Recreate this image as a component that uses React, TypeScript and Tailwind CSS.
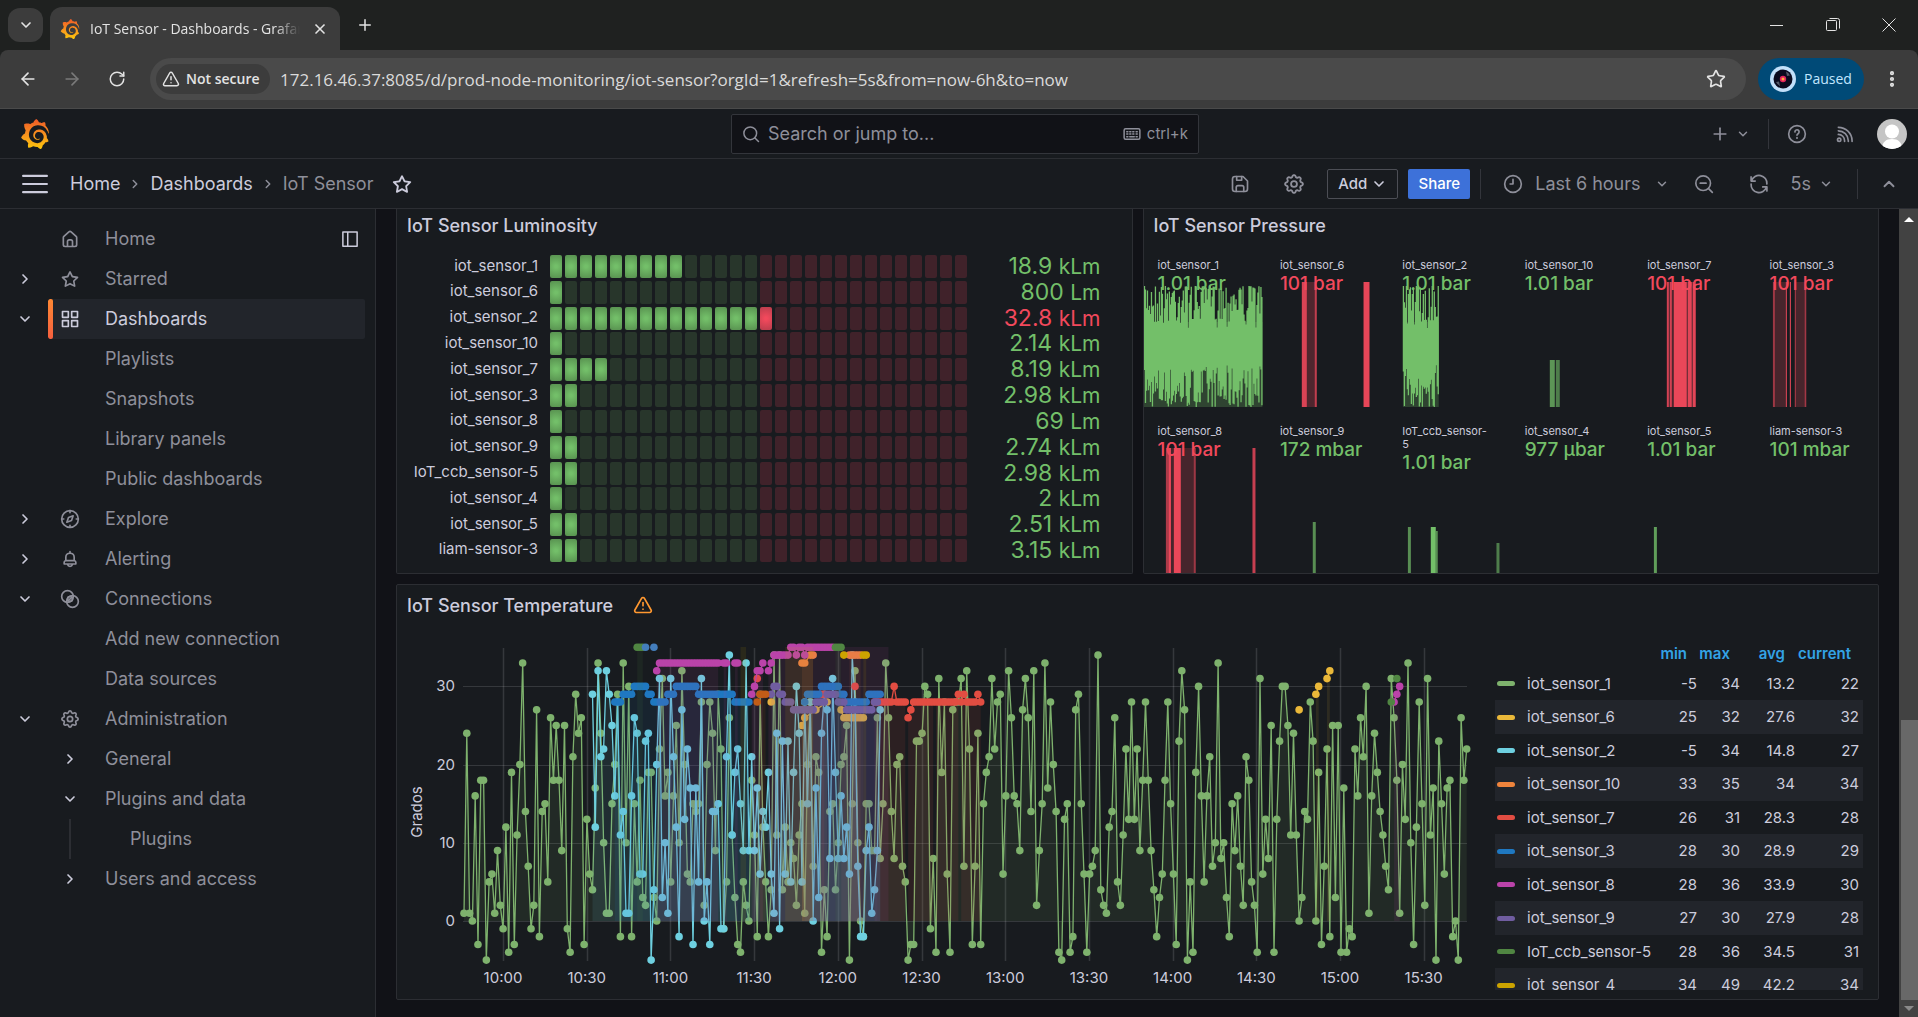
import React from "react";
import { SiGrafana } from "react-icons/si";
import {
  ArrowLeft,
  ArrowRight,
  ChevronDown,
  ChevronRight,
  ChevronUp,
  EllipsisVertical,
  Plus,
  RotateCw,
  Star,
  TriangleAlert,
  X,
} from "lucide-react";

/* ---------------------------------- icons --------------------------------- */

const PATHS = {
  star: "M22,9.67A1,1,0,0,0,21.14,9l-5.69-.83L12.9,3a1,1,0,0,0-1.8,0L8.55,8.16,2.86,9a1,1,0,0,0-.81.68,1,1,0,0,0,.25,1l4.13,4-1,5.68A1,1,0,0,0,6.9,21.44L12,18.77l5.1,2.67a.93.93,0,0,0,.46.12,1,1,0,0,0,.59-.19,1,1,0,0,0,.4-1l-1-5.68,4.13-4A1,1,0,0,0,22,9.67Zm-6.15,4a1,1,0,0,0-.29.88l.72,4.2-3.76-2a1.06,1.06,0,0,0-.94,0l-3.76,2,.72-4.2a1,1,0,0,0-.29-.88l-3-3,4.21-.61a1,1,0,0,0,.76-.55L12,5.7l1.88,3.82a1,1,0,0,0,.76.55l4.21.61Z",
  apps: "M10,13H3a1,1,0,0,0-1,1v7a1,1,0,0,0,1,1h7a1,1,0,0,0,1-1V14A1,1,0,0,0,10,13ZM9,20H4V15H9ZM21,2H14a1,1,0,0,0-1,1v7a1,1,0,0,0,1,1h7a1,1,0,0,0,1-1V3A1,1,0,0,0,21,2ZM20,9H15V4h5Zm1,4H14a1,1,0,0,0-1,1v7a1,1,0,0,0,1,1h7a1,1,0,0,0,1-1V14A1,1,0,0,0,21,13Zm-1,7H15V15h5ZM10,2H3A1,1,0,0,0,2,3v7a1,1,0,0,0,1,1h7a1,1,0,0,0,1-1V3A1,1,0,0,0,10,2ZM9,9H4V4H9Z",
  home: "M20,8h0L14,2.74a3,3,0,0,0-4,0L4,8a3,3,0,0,0-1,2.26V19a3,3,0,0,0,3,3H18a3,3,0,0,0,3-3V10.25A3,3,0,0,0,20,8ZM14,20H10V15a1,1,0,0,1,1-1h2a1,1,0,0,1,1,1Zm5-1a1,1,0,0,1-1,1H16V15a3,3,0,0,0-3-3H11a3,3,0,0,0-3,3v5H6a1,1,0,0,1-1-1V10.25a1,1,0,0,1,.34-.75l6-5.25a1,1,0,0,1,1.32,0l6,5.25a1,1,0,0,1,.34.75Z",
  bell: "M18,13.18V10a6,6,0,0,0-5-5.91V3a1,1,0,0,0-2,0V4.09A6,6,0,0,0,6,10v3.18A3,3,0,0,0,4,16v2a1,1,0,0,0,1,1H8.14a4,4,0,0,0,7.72,0H19a1,1,0,0,0,1-1V16A3,3,0,0,0,18,13.18ZM8,10a4,4,0,0,1,8,0v3H8Zm4,10a2,2,0,0,1-1.72-1h3.44A2,2,0,0,1,12,20Zm6-3H6V16a1,1,0,0,1,1-1H17a1,1,0,0,1,1,1Z",
};

const COG = (() => {
  const pts: string[] = [];
  for (let i = 0; i < 96; i++) {
    const t = (i / 96) * Math.PI * 2;
    const c = Math.cos(8 * t);
    const r = 8.6 + 1.1 * Math.sign(c) * Math.pow(Math.abs(c), 0.6);
    pts.push(`${(12 + r * Math.cos(t)).toFixed(2)},${(12 + r * Math.sin(t)).toFixed(2)}`);
  }
  return "M" + pts.join("L") + "Z";
})();

type IconName =
  | keyof typeof PATHS
  | "cog"
  | "compass"
  | "link"
  | "dock"
  | "search"
  | "keyboard"
  | "save"
  | "clock"
  | "zoomOut"
  | "sync"
  | "help"
  | "rss"
  | "menu";

function Icon({ name, className = "size-5" }: { name: IconName; className?: string }) {
  if (name in PATHS) {
    return (
      <svg viewBox="0 0 24 24" fill="currentColor" className={className} aria-hidden="true">
        <path d={PATHS[name as keyof typeof PATHS]} />
      </svg>
    );
  }
  const body: Record<string, React.ReactNode> = {
    cog: (
      <>
        <path d={COG} />
        <circle cx="12" cy="12" r="3.2" />
      </>
    ),
    compass: (
      <>
        <circle cx="12" cy="12" r="10" />
        <path d="M15.8 8.2 13.8 13.8 8.2 15.8 10.2 10.2ZM12 2v2.5M12 19.500v2.5M2 12h2.500M19.500 12H22" />
      </>
    ),
    link: (
      <>
        <circle cx="9" cy="9" r="7" />
        <circle cx="15" cy="15" r="7" />
        <circle cx="12" cy="12" r="3" />
        <path d="M10 14 14 10" />
      </>
    ),
    dock: (
      <>
        <path d="M2.500 2.500h19v19h-19ZM9 2.500v19" />
      </>
    ),
    search: (
      <>
        <circle cx="11" cy="11" r="8.500" />
        <path d="m17 17 5 5" />
      </>
    ),
    keyboard: (
      <>
        <rect x="1.500" y="5" width="21" height="14" rx="2" />
        <path d="M5 9h1.500M9 9h1.500M13 9h1.500M17.500 9H19M5 12h1.500M9 12h1.500M13 12h1.500M17.500 12H19M5 15.500h1.500M9 15.500h6M17.500 15.500H19" />
      </>
    ),
    save: (
      <>
        <path d="M6 3h9.600L21 8.400V18a3 3 0 0 1-3 3H6a3 3 0 0 1-3-3V6a3 3 0 0 1 3-3Z" />
        <path d="M8 3v4.500h6V3M7.500 21v-5a2 2 0 0 1 2-2h5a2 2 0 0 1 2 2v5" />
      </>
    ),
    clock: (
      <>
        <circle cx="12" cy="12" r="10" />
        <path d="M12 6.500V12H8.500" />
      </>
    ),
    zoomOut: (
      <>
        <circle cx="11" cy="11" r="8.800" />
        <path d="m17.500 17.500 4.500 4.500M7.500 11h7" />
      </>
    ),
    sync: (
      <>
        <path d="M2.500 3.500v5h5M3 8.300A9.500 9.500 0 0 1 21.500 12M21.500 20.500v-5h-5M21 15.700A9.500 9.500 0 0 1 2.500 12" />
      </>
    ),
    help: (
      <>
        <circle cx="12" cy="12" r="10" />
        <path d="M9.500 9.500a2.500 2.500 0 1 1 3.800 2.100c-.8.5-1.300.9-1.300 1.900M12 16.200v.8" />
      </>
    ),
    rss: (
      <>
        <circle cx="5" cy="19" r="2" />
        <path d="M4 12.500A7.500 7.500 0 0 1 11.500 20v1M4 8.200A12 12 0 0 1 16 20v1M4 4A16.500 16.500 0 0 1 20.500 20v1" />
      </>
    ),
    menu: <path d="M1 4.500h22M1 12h22M1 19.500h22" />,
  };
  return (
    <svg
      viewBox="0 0 24 24"
      fill="none"
      stroke="currentColor"
      strokeWidth="2"
      strokeLinecap="round"
      strokeLinejoin="round"
      className={className}
      aria-hidden="true"
    >
      {body[name]}
    </svg>
  );
}

function Logo({ className }: { className: string }) {
  return (
    <>
      <svg className="absolute size-0" aria-hidden="true">
        <defs>
          <linearGradient id="flame" x1="0" y1="1" x2="0" y2="0">
            <stop offset="0" stopColor="#fcc70b" />
            <stop offset="0.4" stopColor="#f99b1c" />
            <stop offset="1" stopColor="#f05a28" />
          </linearGradient>
        </defs>
      </svg>
      <SiGrafana className={className} fill="url(#flame)" aria-hidden="true" />
    </>
  );
}

/* ------------------------------- browser frame ---------------------------- */

function BrowserFrame() {
  return (
    <header className="shrink-0 bg-[#1f2120] font-['Open_Sans',sans-serif] text-[#e3e3e3]">
      <div className="flex h-[50px] items-center">
        <button
          aria-label="Search tabs"
          className="ml-2 flex h-[34px] w-[35px] items-center justify-center rounded-xl bg-[#3c3c3c]"
        >
          <ChevronDown className="size-4" strokeWidth={2.5} />
        </button>
        <div className="ml-[7px] flex h-[43px] w-[290px] items-center self-end rounded-t-xl bg-[#3c3c3c] pl-2.5">
          <Logo className="size-5 shrink-0" />
          <span className="ml-2.5 w-[210px] overflow-hidden text-sm whitespace-nowrap [mask-image:linear-gradient(to_right,black_88%,transparent)]">
            IoT Sensor - Dashboards - Grafana
          </span>
          <button aria-label="Close tab" className="ml-3">
            <X className="size-4" strokeWidth={2.5} />
          </button>
        </div>
        <button aria-label="New tab" className="ml-4">
          <Plus className="size-[18px]" />
        </button>
        <div className="mr-px ml-auto flex h-full">
          <button aria-label="Minimize" className="flex w-14 items-center justify-center">
            <svg viewBox="0 0 14 14" className="size-3.5" stroke="currentColor" aria-hidden="true">
              <path d="M0 7.500h13" />
            </svg>
          </button>
          <button aria-label="Restore" className="flex w-14 items-center justify-center">
            <svg viewBox="0 0 14 14" className="size-3.5" fill="none" stroke="currentColor" aria-hidden="true">
              <rect x=".5" y="2.500" width="10" height="10" rx="1" />
              <path d="M3.500.5h8a2 2 0 0 1 2 2v8" />
            </svg>
          </button>
          <button aria-label="Close" className="flex w-14 items-center justify-center">
            <svg viewBox="0 0 14 14" className="size-3.5" stroke="currentColor" aria-hidden="true">
              <path d="m.5.5 13 13M13.500.5l-13 13" />
            </svg>
          </button>
        </div>
      </div>
      <div className="flex h-[59px] items-center rounded-t-lg border-b border-[#4a4a4a] bg-[#3c3c3c]">
        <button aria-label="Back" className="ml-[18px]">
          <ArrowLeft className="size-5" />
        </button>
        <button aria-label="Forward" className="ml-6 text-[#7a7a7a]" disabled>
          <ArrowRight className="size-5" />
        </button>
        <button aria-label="Reload" className="ml-[26px]">
          <RotateCw className="size-[18px]" />
        </button>
        <div className="ml-6 flex h-[42px] flex-1 items-center rounded-full bg-[#4a4a4a] pl-1.5">
          <button className="flex h-[30px] w-[114px] shrink-0 items-center gap-1.5 rounded-full bg-[#3c3c3c] pl-1.5 text-sm font-semibold whitespace-nowrap text-[#e3e3e3]">
            <TriangleAlert className="size-[18px]" />
            Not secure
          </button>
          <div className="ml-2.5 h-full flex-1">
            <input
              aria-label="Address"
              defaultValue="172.16.46.37:8085/d/prod-node-monitoring/iot-sensor?orgId=1&refresh=5s&from=now-6h&to=now"
              className="h-full w-full bg-transparent text-[17px] text-[#dadada] outline-none"
            />
          </div>
          <button aria-label="Bookmark" className="mr-5">
            <Star className="size-5" />
          </button>
        </div>
        <button className="ml-3 flex h-[42px] w-[106px] items-center gap-2 rounded-full bg-[#004a77] pl-3 text-sm text-[#c2e7ff]">
          <svg viewBox="0 0 26 26" className="size-[26px]" aria-hidden="true">
            <circle cx="13" cy="13" r="13" fill="#c2e0fa" />
            <circle cx="13" cy="13" r="9.500" fill="#0a0a1e" />
            <path d="M16 5.500a8 8 0 0 1 4 4l-3 .5ZM6 16l3-.5 1 4.500a8 8 0 0 1-4-4Z" fill="#555a68" />
            <circle cx="13" cy="13" r="3.200" fill="#e0245e" />
            <circle cx="13" cy="13" r="1.500" fill="#ffb03a" />
          </svg>
          Paused
        </button>
        <button aria-label="Menu" className="mr-4 ml-[18px]">
          <EllipsisVertical className="size-5" strokeWidth={3} />
        </button>
      </div>
    </header>
  );
}

/* ------------------------------- grafana bars ----------------------------- */

function Divider() {
  return <span className="h-[30px] w-px bg-[#33353b]" />;
}

function TopBar() {
  return (
    <div className="flex h-[50px] shrink-0 items-center border-b border-[#2c2e33] bg-[#181b1f] text-[#8e8f9a]">
      <div className="flex flex-1 items-center">
        <a href="#home" aria-label="Grafana" className="ml-5">
          <Logo className="size-[30px]" />
        </a>
      </div>
      <label className="ml-3 flex h-10 w-[468px] items-center rounded-xs border border-[#33353b] bg-[#111217] px-2.5">
        <Icon name="search" className="size-[18px]" />
        <input
          aria-label="Search or jump to"
          placeholder="Search or jump to..."
          className="ml-2 min-w-0 flex-1 bg-transparent text-lg outline-none placeholder:text-[#8e8f9a]"
        />
        <Icon name="keyboard" className="size-[18px]" />
        <span className="ml-1.5 text-[15px] leading-5">ctrl+k</span>
      </label>
      <div className="flex flex-1 items-center justify-end">
        <button aria-label="New" className="mr-[18px] flex items-center gap-1.5">
          <Plus className="size-5" />
          <ChevronDown className="size-3.5" strokeWidth={2.5} />
        </button>
        <Divider />
        <button aria-label="Help" className="ml-[18px]">
          <Icon name="help" className="size-5" />
        </button>
        <button aria-label="News" className="ml-7">
          <Icon name="rss" className="size-5" />
        </button>
        <button aria-label="Profile" className="mr-[11px] ml-[22px] size-[30px] overflow-hidden rounded-full">
          <svg viewBox="0 0 30 30" aria-hidden="true">
            <rect width="30" height="30" fill="#c5c5c5" />
            <circle cx="15" cy="12.500" r="7" fill="#fff" />
            <path d="M5 30c0-7 4-10 10-10s10 3 10 10Z" fill="#fff" />
          </svg>
        </button>
      </div>
    </div>
  );
}

function ToolBar() {
  return (
    <div className="flex h-[50px] shrink-0 items-center border-b border-[#2c2e33] bg-[#181b1f] text-lg text-[#8e8f9a]">
      <button aria-label="Toggle menu" className="ml-[22px] text-[#ccccdc]">
        <Icon name="menu" className="size-[26px]" />
      </button>
      <nav aria-label="Breadcrumbs" className="ml-[22px] flex items-center">
        <a href="#home" className="text-[#ccccdc]">
          Home
        </a>
        <ChevronRight className="mx-2 size-3.5" strokeWidth={2.5} />
        <a href="#dashboards" className="text-[#ccccdc]">
          Dashboards
        </a>
        <ChevronRight className="mx-2 size-3.5" strokeWidth={2.5} />
        <span>IoT Sensor</span>
      </nav>
      <button aria-label="Mark as favorite" className="ml-[18px] text-[#ccccdc]">
        <Icon name="star" className="size-[22px]" />
      </button>
      <div className="ml-auto flex items-center">
        <button aria-label="Save dashboard">
          <Icon name="save" className="size-5" />
        </button>
        <button aria-label="Dashboard settings" className="ml-[33px]">
          <Icon name="cog" className="size-[22px]" />
        </button>
        <button className="ml-[22px] flex h-[30px] w-[71px] items-center justify-center gap-1 rounded-xs border border-[#4c4e55] text-[15px] font-medium text-[#ccccdc]">
          Add
          <ChevronDown className="size-4" strokeWidth={2.5} />
        </button>
        <button className="mr-2.5 ml-2.5 h-[30px] w-[62px] rounded-xs bg-[#3d71d9] text-[15px] font-medium text-white">
          Share
        </button>
        <Divider />
        <button className="ml-[22px] flex items-center">
          <Icon name="clock" className="size-5" />
          <span className="ml-3">Last 6 hours</span>
          <ChevronDown className="ml-3.5 size-3.5" strokeWidth={2.5} />
        </button>
        <button aria-label="Zoom out" className="ml-[25px]">
          <Icon name="zoomOut" className="size-5" />
        </button>
        <button aria-label="Refresh" className="ml-[35px]">
          <Icon name="sync" className="size-5" />
        </button>
        <button className="ml-[22px] flex items-center gap-2">
          5s
          <ChevronDown className="size-3.5" strokeWidth={2.5} />
        </button>
        <span className="w-6" />
        <Divider />
        <button aria-label="Collapse toolbar" className="mr-5 ml-[22px]">
          <ChevronUp className="size-[18px]" strokeWidth={2.5} />
        </button>
      </div>
    </div>
  );
}

/* --------------------------------- sidebar -------------------------------- */

type NavItem = {
  label: string;
  icon?: IconName;
  open?: boolean;
  active?: boolean;
  level?: 1 | 2;
};

const NAV: NavItem[] = [
  { label: "Home", icon: "home" },
  { label: "Starred", icon: "star", open: false },
  { label: "Dashboards", icon: "apps", open: true, active: true },
  { label: "Playlists" },
  { label: "Snapshots" },
  { label: "Library panels" },
  { label: "Public dashboards" },
  { label: "Explore", icon: "compass", open: false },
  { label: "Alerting", icon: "bell", open: false },
  { label: "Connections", icon: "link", open: true },
  { label: "Add new connection" },
  { label: "Data sources" },
  { label: "Administration", icon: "cog", open: true },
  { label: "General", open: false, level: 1 },
  { label: "Plugins and data", open: true, level: 1 },
  { label: "Plugins", level: 2 },
  { label: "Users and access", open: false, level: 1 },
];

function Toggle({ open, label }: { open: boolean; label: string }) {
  return (
    <button aria-label={`${open ? "Collapse" : "Expand"} ${label}`} className="text-[#ccccdc]">
      {open ? (
        <ChevronDown className="size-4" strokeWidth={2.5} />
      ) : (
        <ChevronRight className="size-4" strokeWidth={2.5} />
      )}
    </button>
  );
}

function Sidebar() {
  return (
    <nav
      aria-label="Main"
      className="w-94 shrink-0 border-r border-[#2c2e33] bg-[#181b1f] pt-2.5 text-lg text-[#8e8f9a]"
    >
      <ul>
        {NAV.map((n) => (
          <li key={n.label} className="flex h-10">
            <div className="flex w-12 shrink-0 items-center justify-center pl-0.5">
              {n.open !== undefined && !n.level && <Toggle open={n.open} label={n.label} />}
            </div>
            <div
              className={
                n.active
                  ? "mr-2.5 flex flex-1 items-center overflow-hidden rounded-xs bg-[#22252b] text-[#ccccdc]"
                  : "mr-2.5 flex flex-1 items-center"
              }
            >
              <span
                className={
                  n.active ? "h-full w-[5px] rounded-xs bg-linear-to-b from-[#ff8833] to-[#f55f3e]" : "w-[5px]"
                }
              />
              <span className="flex h-full w-[34px] items-center justify-center">
                {n.icon && <Icon name={n.icon} className="size-5" />}
                {n.open !== undefined && n.level === 1 && <Toggle open={n.open} label={n.label} />}
                {n.level === 2 && <span className="h-full w-0.5 bg-[#2c2e33]" />}
              </span>
              <a href="#nav" className={n.level === 2 ? "ml-[43px]" : "ml-[18px]"}>
                {n.label}
              </a>
              {n.icon === "home" && (
                <button aria-label="Undock menu" className="mr-1.5 ml-auto text-[#ccccdc]">
                  <Icon name="dock" className="size-[18px]" />
                </button>
              )}
            </div>
          </li>
        ))}
      </ul>
    </nav>
  );
}

/* ---------------------------- luminosity panel ---------------------------- */

const LUMINOSITY: [string, string, string, number][] = [
  ["iot_sensor_1", "18.9", "kLm", 9],
  ["iot_sensor_6", "800", "Lm", 1],
  ["iot_sensor_2", "32.8", "kLm", 15],
  ["iot_sensor_10", "2.14", "kLm", 1],
  ["iot_sensor_7", "8.19", "kLm", 4],
  ["iot_sensor_3", "2.98", "kLm", 2],
  ["iot_sensor_8", "69", "Lm", 1],
  ["iot_sensor_9", "2.74", "kLm", 2],
  ["IoT_ccb_sensor-5", "2.98", "kLm", 2],
  ["iot_sensor_4", "2", "kLm", 1],
  ["iot_sensor_5", "2.51", "kLm", 2],
  ["liam-sensor-3", "3.15", "kLm", 2],
];

const CELLS = Array.from({ length: 28 }, (_, i) => i);

function cellClass(i: number, lit: number) {
  if (i < lit && i < 14)
    return "flex-1 rounded-xs bg-[radial-gradient(circle,#73bf69_10%,#57904f)]";
  if (i < lit) return "flex-1 rounded-xs bg-[radial-gradient(circle,#f2495c_10%,#b83d4c)]";
  return i < 14 ? "flex-1 rounded-xs bg-[#28362b]" : "flex-1 rounded-xs bg-[#40222a]";
}

function LuminosityPanel() {
  return (
    <section className="rounded-b-xs border border-t-0 border-[#2c2e33] bg-[#181b1f] text-[#ccccdc]">
      <h2 className="flex h-8 items-center pt-0.5 pl-2.5 text-lg leading-6 font-medium">IoT Sensor Luminosity</h2>
      <div className="flex h-[332px] flex-col justify-between pt-3.5 pr-[31px] pb-[11px]">
        {LUMINOSITY.map(([name, value, unit, lit]) => (
          <div key={name} className="flex h-[23px] items-center">
            <span className="w-[141px] shrink-0 pb-0.5 text-right text-[15px] leading-5">{name}</span>
            <div className="ml-3 flex h-full flex-1 gap-[3px]">
              {CELLS.map((i) => (
                <span key={i} className={cellClass(i, lit)} />
              ))}
            </div>
            <span
              className={
                lit > 14
                  ? "w-[133px] text-right text-[23px] leading-6 text-[#f2495c]"
                  : "w-[133px] text-right text-[23px] leading-6 text-[#73bf69]"
              }
            >
              {value} <span className="text-[21px]">{unit}</span>
            </span>
          </div>
        ))}
      </div>
    </section>
  );
}

/* ----------------------------- pressure panel ----------------------------- */

/* x, width, height, opacity */
type Bar = [number, number, number, number];

const PRESSURE: { name: string; value: string; high?: boolean; noise?: [number, number]; bars?: Bar[] }[] = [
  { name: "iot_sensor_1", value: "1.01 bar", noise: [0, 119] },
  {
    name: "iot_sensor_6",
    value: "101 bar",
    high: true,
    bars: [
      [36, 15, 125, 0.25],
      [36, 5, 125, 0.85],
      [49, 2, 125, 0.7],
      [98, 6, 125, 0.95],
    ],
  },
  { name: "iot_sensor_2", value: "1.01 bar", noise: [15, 51] },
  {
    name: "iot_sensor_10",
    value: "1.01 bar",
    bars: [
      [39, 5, 47, 0.75],
      [45, 4, 47, 0.6],
    ],
  },
  {
    name: "iot_sensor_7",
    value: "101 bar",
    high: true,
    bars: [
      [34, 29, 125, 0.25],
      [34, 2, 125, 0.8],
      [37, 2, 125, 0.8],
      [41, 13, 125, 0.95],
      [55, 4, 125, 0.9],
      [60, 3, 125, 0.9],
    ],
  },
  {
    name: "iot_sensor_3",
    value: "101 bar",
    high: true,
    bars: [
      [17, 14, 125, 0.22],
      [17, 2, 125, 0.5],
      [30, 1, 125, 0.9],
      [34, 1, 125, 1],
      [39, 12, 125, 0.22],
      [39, 1, 125, 0.6],
      [49, 1, 125, 0.7],
    ],
  },
  {
    name: "iot_sensor_8",
    value: "101 bar",
    high: true,
    bars: [
      [22, 30, 125, 0.22],
      [22, 5, 125, 0.6],
      [25, 2, 125, 0.9],
      [30, 7, 125, 0.95],
      [50, 2, 125, 0.5],
      [109, 3, 125, 0.8],
    ],
  },
  { name: "iot_sensor_9", value: "172 mbar", bars: [[47, 3, 51, 0.7]] },
  {
    name: "IoT_ccb_sensor-5",
    value: "1.01 bar",
    bars: [
      [20, 3, 46, 0.7],
      [43, 5, 46, 1],
      [48, 2, 42, 0.7],
      [109, 3, 30, 0.6],
    ],
  },
  { name: "iot_sensor_4", value: "977 µbar" },
  { name: "iot_sensor_5", value: "1.01 bar", bars: [[21, 3, 46, 0.8]] },
  { name: "liam-sensor-3", value: "101 mbar" },
];

function noisePath(from: number, to: number) {
  let seed = 7 + from;
  const rnd = () => {
    seed = (seed * 16807) % 2147483647;
    return seed / 2147483647;
  };
  let d = "";
  for (let x = from + 0.5; x < to; x += 1) {
    const top = 4 + Math.pow(rnd(), 2) * 42;
    const bottom = 125 - Math.pow(rnd(), 1.5) * 42;
    d += `M${x} ${top.toFixed(1)}V${bottom.toFixed(1)}`;
  }
  return d;
}

function PressurePanel() {
  return (
    <section className="rounded-b-xs border border-t-0 border-[#2c2e33] bg-[#181b1f] text-[#ccccdc]">
      <h2 className="flex h-8 items-center pt-0.5 pl-2.5 text-lg leading-6 font-medium">IoT Sensor Pressure</h2>
      <div className="grid grid-cols-6 grid-rows-[166px_166px] overflow-hidden">
        {PRESSURE.map((p) => (
          <div key={p.name} className="relative pt-[18px] pr-5 pl-3.5">
            <div className="text-[11px] leading-[13px]">{p.name}</div>
            <div
              className={
                p.high
                  ? "text-[19px] leading-[23px] font-medium whitespace-nowrap text-[#f2495c]"
                  : "text-[19px] leading-[23px] font-medium whitespace-nowrap text-[#73bf69]"
              }
            >
              {p.value}
            </div>
            <svg
              viewBox="0 0 123 125"
              preserveAspectRatio="none"
              className={
                p.high
                  ? "absolute inset-x-0 bottom-0 h-[125px] w-full text-[#f2495c]"
                  : "absolute inset-x-0 bottom-0 h-[125px] w-full text-[#73bf69]"
              }
              aria-hidden="true"
            >
              {p.noise && (
                <>
                  <rect
                    x={p.noise[0]}
                    y="40"
                    width={p.noise[1] - p.noise[0]}
                    height="85"
                    fill="currentColor"
                    opacity="0.25"
                  />
                  <path d={noisePath(p.noise[0], p.noise[1])} fill="none" stroke="currentColor" strokeWidth="1.3" />
                </>
              )}
              {p.bars?.map(([x, w, h, o], i) => (
                <rect key={i} x={x} y={125 - h} width={w} height={h} fill="currentColor" opacity={o} />
              ))}
            </svg>
          </div>
        ))}
      </div>
    </section>
  );
}

/* ---------------------------- temperature panel --------------------------- */

const SENSOR_1 = [
  1, 24, 1, 0, 16, -3, 18, 18, -5, 5, 6, 1, 9, 2, -1, 12, -4, 19, -3, 11,
  20, 33, 14, 7, -1, 2, 27, -2, 14, 15, 5, 26, 18, 25, 18, 9, 25, -1, -4, 21,
  29, 24, 26, -3, 13, 6, 4, 17, 33, 24, 10, 1, 1, 15, 20, 29, -2, 33, 10, 30,
  -2, 15, 5, 18, 3, 2, 19, 19, 3, 0, 22, 31, 16, 19, 5, 16, 25, 10, 32, 20,
  6, 5, 15, 14, 15, 28, 2, 20, 28, 24, 9, 29, 22, -1, 5, 26, 11, 3, -3, -4,
  5, 2, 0, 18, 11, -2, 29, 12, 5, -2, 4, 34, 11, 34, 4, 12, 5, 10, 8, 2,
  11, 15, 1, 20, 28, 7, 21, 19, -4, 4, -2, 14, 15, 4, 10, 20, 21, 25, -5, 15,
  32, 10, 0, -2, 15, 15, 9, 9, 26, 8, 15, 33, 26, 14, 8, 20, 21, 7, 5, -5,
  -3, -3, 23, 23, 24, 30, 29, -1, 8, -4, 31, 19, 28, 6, -4, 27, 28, 28, 31, 7,
  32, 22, -3, 7, 24, -3, 15, 19, 21, 31, 22, 28, 29, 6, 16, 32, 26, 16, 15, 9,
  27, 31, 26, 14, 32, 2, 9, 15, 33, 17, 28, 20, 14, -4, -5, 13, 15, -4, -2, 27,
  29, 15, 6, -4, 6, 7, 9, 34, 4, 2, 1, 12, 14, 26, 5, 2, 11, 22, 13, 28,
  13, 22, 9, 18, 28, 18, 9, 4, -2, 3, 6, 18, 28, 15, 6, -3, 23, 32, 27, -5,
  5, -4, 19, 30, 16, 5, 16, 21, 7, 10, 33, 8, 10, 3, -2, 15, 9, 16, 7, 2,
  21, 18, 5, 2, -4, 31, 6, 13, 8, 25, -4, 13, 23, 30, 30, 25, 11, 24, 11, 0,
  3, 14, 13, 28, 23, 0, 19, -3, 7, 22, -2, 25, 3, 25, -4, 17, -4, -1, -2, 22,
  16, 26, 21, 30, 1, 16, 24, 19, 14, 11, 7, 4, 31, 26, 18, 1, 20, 13, 33, 10,
  -3, 12, 28, 15, 2, 31, 11, 17, -5, 23, 15, 6, 17, 18, -2, 0, -5, 26, 18, 22,
];

const SENSOR_2 = [
  29, 12, 32, 21, 22, 32, 29, 25, 16, 28, 11, 14, 1, 1, 16, 26, 24, 6, 6, 23,
  24, -5, 4, 20, 31, 3, 10, 1, 31, 21, 12, -2, 27, 13, 22, 17, -3, 17, 5, 31,
  0, 5, -3, 14, 14, 15, -1, -1, 21, 34, 11, 19, 22, 15, 9, 33, 9, 21, 9, 17,
  6, 14, 12, 19, 6, 1, 24, -1, 23, 6, 23, 5, 19, 30, 24, 5, 28, 15, 28, 0,
  17, 3, 24, 29, 27, 8, 31, 19, 8, 16, 8, 12, 6, 34, 28, 7, -2, -2, 9, 12,
  1, 4, 9, 27,
];

/* A run is [first sample, last sample, value]; runs in one segment are joined. */
type Run = [number, number, number];
type Series = { color: string; segments: Run[][] };

const each = (start: number, values: number[]): Run[] => values.map((v, i) => [start + i, start + i, v]);

const SERIES: Series[] = [
  { color: "#7eb26d", segments: [each(0, SENSOR_1)] },
  {
    color: "#eab839",
    segments: [
      [[110, 110, 28]],
      [[121, 121, 25], [122, 122, 26], [126, 126, 27], [130, 130, 28]],
      [[135, 135, 27], [136, 143, 26]],
      [[299, 299, 27]],
      [[305, 305, 29], [306, 306, 30]],
      [[309, 309, 31], [310, 310, 32]],
    ],
  },
  { color: "#6ed0e0", segments: [each(46, SENSOR_2)] },
  {
    color: "#ef843c",
    segments: [
      [[121, 122, 33], [124, 125, 34]],
      [[138, 142, 34]],
    ],
  },
  {
    color: "#e24d42",
    segments: [
      [[105, 105, 31]],
      [[128, 129, 29]],
      [[140, 140, 30]],
      [[147, 153, 28], [154, 154, 30], [155, 158, 28]],
      [[159, 159, 26], [160, 160, 27], [161, 168, 28]],
      [[169, 176, 28], [177, 177, 29]],
      [[178, 178, 28], [179, 179, 29], [180, 183, 28], [184, 184, 29], [185, 185, 28]],
    ],
  },
  {
    color: "#1f78c1",
    segments: [
      [[54, 56, 28], [57, 60, 29], [61, 65, 30], [66, 67, 29], [68, 72, 28], [73, 75, 29], [76, 83, 30], [84, 96, 29], [97, 102, 28]],
      [[122, 122, 28], [123, 127, 29], [128, 134, 30], [135, 136, 29], [137, 144, 28], [145, 149, 29]],
    ],
  },
  {
    color: "#ba43a9",
    segments: [
      [[69, 69, 32], [70, 91, 33]],
      [[93, 94, 33]],
      [[97, 98, 33]],
      [[103, 103, 29], [104, 104, 30], [105, 106, 32], [107, 107, 33]],
      [[109, 109, 32], [110, 110, 33], [111, 116, 34], [117, 118, 35], [119, 119, 34], [120, 121, 35], [122, 122, 34], [123, 132, 35], [133, 152, 36]],
      [[333, 333, 28], [334, 334, 29], [335, 335, 30]],
    ],
  },
  {
    color: "#705da0",
    segments: [
      [[110, 110, 29], [111, 112, 30], [113, 114, 29], [115, 117, 28], [118, 125, 27], [126, 129, 28], [130, 133, 29], [134, 136, 28], [137, 146, 27], [147, 148, 28]],
    ],
  },
  {
    color: "#508642",
    segments: [[[62, 64, 35]], [[133, 135, 35]], [[332, 332, 28]], [[334, 334, 31]]],
  },
  {
    color: "#cca300",
    segments: [[[99, 101, 49]], [[115, 125, 49]], [[136, 136, 34]], [[143, 144, 34]]],
  },
  { color: "#447ebc", segments: [[[65, 65, 35]], [[68, 68, 35]]] },
  { color: "#c15c17", segments: [[[105, 105, 28]], [[106, 108, 29]]] },
];

const px = (k: number) => 464 + k * 2.793;
const py = (v: number) => 921 - v * 7.82;

function SeriesMarks({ color, segments }: Series) {
  return (
    <g fill={color} stroke={color}>
      {segments.map((runs, s) => {
        const pts: [number, number][] = [];
        runs.forEach(([a, b, v]) => {
          for (let k = a; k <= b; k++) pts.push([k, v]);
        });
        const line = pts.map(([k, v]) => `${px(k).toFixed(1)} ${py(v).toFixed(1)}`).join("L");
        const last = pts[pts.length - 1][0];
        return (
          <g key={s}>
            <g clipPath="url(#plot)">
              <path
                d={`M${px(pts[0][0]).toFixed(1)} ${py(0)}L${line}L${px(last).toFixed(1)} ${py(0)}Z`}
                fillOpacity="0.1"
                stroke="none"
              />
              <path d={`M${line}`} fill="none" strokeWidth="1.3" />
            </g>
            {pts
              .filter(([, v]) => v <= 35)
              .map(([k, v]) => (
                <circle key={k} cx={px(k)} cy={py(v)} r="3.8" stroke="none" />
              ))}
          </g>
        );
      })}
    </g>
  );
}

const HOURS = ["10:00", "10:30", "11:00", "11:30", "12:00", "12:30", "13:00", "13:30", "14:00", "14:30", "15:00", "15:30"];

function TemperatureChart() {
  return (
    <svg
      viewBox="397 625 1090 365"
      className="min-w-0 flex-1 self-start font-['Inter',sans-serif] text-[15px]"
      role="img"
      aria-label="Temperature in degrees by sensor from 9:46 to 15:45"
    >
      <defs>
        <clipPath id="plot">
          <rect x="462" y="647" width="1006" height="314" />
        </clipPath>
      </defs>
      <g stroke="#ffffff" strokeOpacity="0.13">
        {[0, 10, 20, 30].map((v) => (
          <path key={v} d={`M463 ${Math.round(py(v)) + 0.5}H1467`} />
        ))}
        {HOURS.map((h, i) => (
          <path key={h} d={`M${Math.round(503 + i * 83.7) + 0.5} 648V961`} strokeWidth="1.500" />
        ))}
      </g>
      {SERIES.map((s) => (
        <SeriesMarks key={s.color} {...s} />
      ))}
      <g fill="#ccccdc">
        {[0, 10, 20, 30].map((v) => (
          <text key={v} x="455" y={py(v) + 5} textAnchor="end">
            {v}
          </text>
        ))}
        {HOURS.map((h, i) => (
          <text key={h} x={503 + i * 83.7} y="983" textAnchor="middle">
            {h}
          </text>
        ))}
        <text transform="translate(422 812) rotate(-90)" textAnchor="middle">
          Grados
        </text>
      </g>
    </svg>
  );
}

const LEGEND: [string, string, string, string, string, string][] = [
  ["#7eb26d", "iot_sensor_1", "-5", "34", "13.2", "22"],
  ["#eab839", "iot_sensor_6", "25", "32", "27.6", "32"],
  ["#6ed0e0", "iot_sensor_2", "-5", "34", "14.8", "27"],
  ["#ef843c", "iot_sensor_10", "33", "35", "34", "34"],
  ["#e24d42", "iot_sensor_7", "26", "31", "28.3", "28"],
  ["#1f78c1", "iot_sensor_3", "28", "30", "28.9", "29"],
  ["#ba43a9", "iot_sensor_8", "28", "36", "33.9", "30"],
  ["#705da0", "iot_sensor_9", "27", "30", "27.9", "28"],
  ["#508642", "IoT_ccb_sensor-5", "28", "36", "34.5", "31"],
  ["#cca300", "iot_sensor_4", "34", "49", "42.2", "34"],
];

function TemperaturePanel() {
  return (
    <section className="rounded-xs border border-[#2c2e33] bg-[#181b1f] text-[#ccccdc]">
      <div className="flex h-10 items-center pl-2.5">
        <h2 className="pt-0.5 text-lg leading-6 font-medium">IoT Sensor Temperature</h2>
        <button aria-label="Panel warning" className="ml-5 text-[#ff9830]">
          <TriangleAlert className="size-5" />
        </button>
      </div>
      <div className="flex pb-[9px]">
        <TemperatureChart />
        <div className="mt-[15px] mr-[15px] ml-2 h-[350px] w-[368px] overflow-hidden">
          <table className="w-full table-fixed text-[15px] leading-5">
            <colgroup>
              <col className="w-8" />
              <col />
              <col className="w-11" />
              <col className="w-[43px]" />
              <col className="w-[55px]" />
              <col className="w-[68px]" />
            </colgroup>
            <thead>
              <tr className="h-[27px] text-right text-[#33a2e5]">
                <th aria-label="Color" />
                <th aria-label="Series" />
                <th className="pr-2.5 font-semibold">min</th>
                <th className="pr-2.5 font-semibold">max</th>
                <th className="pr-2.5 font-semibold">avg</th>
                <th className="pr-3 font-semibold">current</th>
              </tr>
            </thead>
            <tbody>
              {LEGEND.map(([color, name, ...stats]) => (
                <tr key={name} className="text-right odd:h-[33px] even:h-[34px] even:bg-[#22252b]">
                  <td className="pl-0.5">
                    <span className="block h-[5px] w-[18px] rounded-full" style={{ backgroundColor: color }} />
                  </td>
                  <td className="text-left whitespace-nowrap">{name}</td>
                  {stats.map((s, i) => (
                    <td key={i} className="last:pr-1">
                      {s}
                    </td>
                  ))}
                </tr>
              ))}
            </tbody>
          </table>
        </div>
      </div>
    </section>
  );
}

/* ----------------------------------- page --------------------------------- */

function ScrollBar() {
  return (
    <div className="flex w-[19px] shrink-0 flex-col items-center bg-[#424242]" aria-hidden="true">
      <svg viewBox="0 0 10 5" className="mt-2 h-[5px] w-2.5">
        <path d="M0 5 5 0l5 5Z" fill="#fff" />
      </svg>
      <div className="mt-auto h-[280px] w-full border-l-2 border-[#424242] bg-[#686868]" />
      <svg viewBox="0 0 10 5" className="my-1.5 h-[5px] w-2.5">
        <path d="M0 0h10L5 5Z" fill="#8a8a8a" />
      </svg>
    </div>
  );
}

export default function App() {
  return (
    <div className="flex h-screen flex-col overflow-hidden bg-[#111217] font-['Inter',sans-serif]">
      <BrowserFrame />
      <TopBar />
      <ToolBar />
      <div className="flex min-h-0 flex-1 overflow-hidden">
        <Sidebar />
        <main className="flex min-w-0 flex-1 flex-col gap-2.5 overflow-hidden px-5">
          <div className="grid grid-cols-2 gap-2.5">
            <LuminosityPanel />
            <PressurePanel />
          </div>
          <TemperaturePanel />
        </main>
        <ScrollBar />
      </div>
    </div>
  );
}
